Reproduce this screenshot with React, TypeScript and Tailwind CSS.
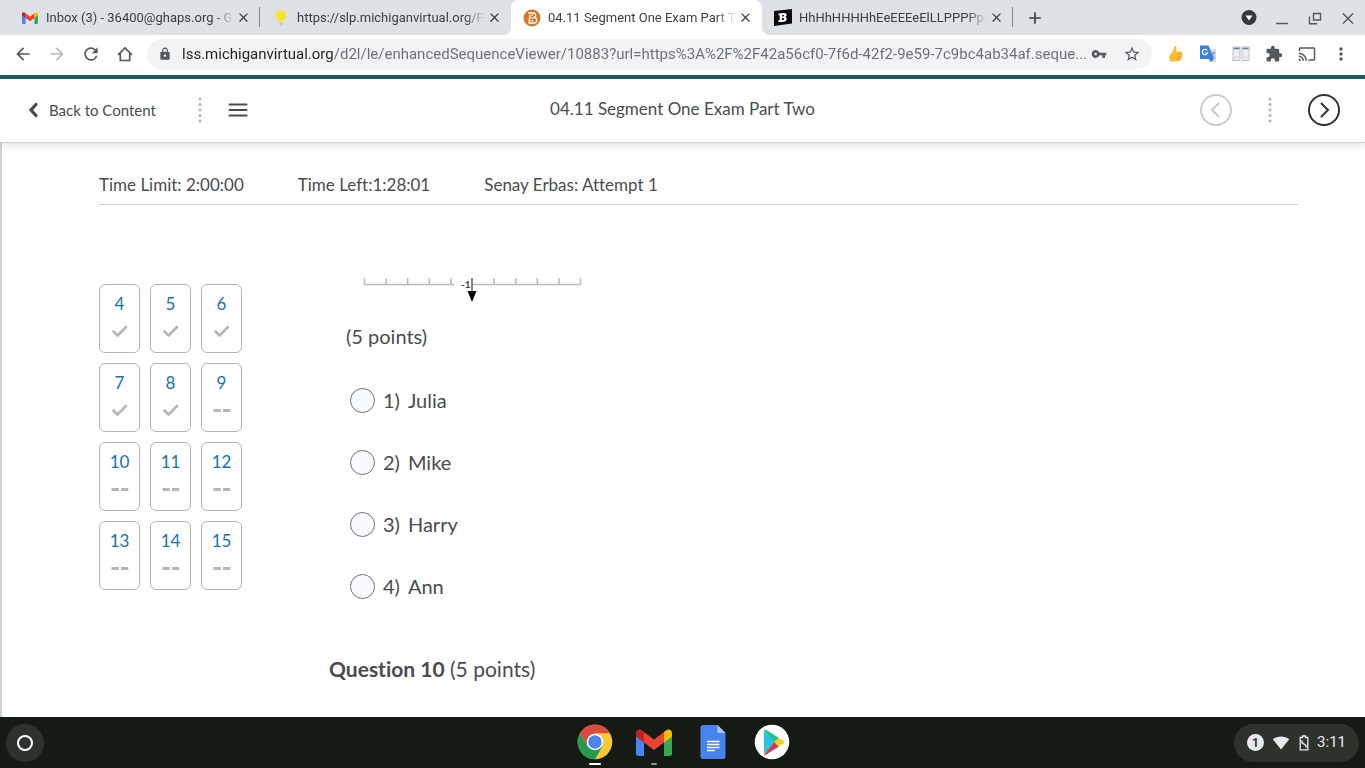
import React from "react";
import {
  MdArrowBack,
  MdArrowForward,
  MdCast,
  MdClose,
  MdAdd,
  MdExtension,
  MdLock,
  MdMoreVert,
  MdRefresh,
  MdStarBorder,
  MdVpnKey,
} from "react-icons/md";

const GmailLogo = ({ className }: { className: string }) => (
  <svg viewBox="0 0 36 27" className={className} aria-hidden="true">
    <path d="M0 4v20.500Q0 27 2.500 27H8V11L4 5z" fill="#4285f4" />
    <path d="M28 11v16h5.500Q36 27 36 24.500V4l-4 1z" fill="#34a853" />
    <path d="M8 3v10.500l10 7.500 10-7.500V3L18 10.500z" fill="#ea4335" />
    <path d="M0 4v3.500l8 6V3L6.500 1.700C3.800-.8 0 .8 0 4z" fill="#c5221f" />
    <path d="M36 4v3.500l-8 6V3l1.500-1.300C32.200-.8 36 .8 36 4z" fill="#fbbc04" />
  </svg>
);

const BulbIcon = () => (
  <svg viewBox="0 0 16 18" className="h-[18px] w-4" aria-hidden="true">
    <path d="M2 2h12v6l-3 3.500v2H5v-2L2 8z" fill="#fde047" opacity=".5" />
    <path d="M8 1.500a4.500 4.500 0 0 0-3 7.800L6.500 12h3L11 9.300a4.500 4.500 0 0 0-3-7.800z" fill="#fbe51e" />
    <path d="M6 13.500h4V15l-2 1.500L6 15z" fill="#c3cbd3" />
  </svg>
);

const CourseIcon = () => (
  <svg viewBox="0 0 18 18" className="h-[18px] w-[18px]" aria-hidden="true">
    <circle cx="9" cy="9" r="8.500" fill="#d9772b" />
    <path d="M5 4h5.500a2.300 2.300 0 0 1 .8 4.400A2.700 2.700 0 0 1 10.500 14H6l1-8" fill="none" stroke="#fff" strokeWidth="1.300" />
    <path d="M8 6.200h2M7.700 9h2.500M7.400 11.800h2.800" stroke="#fff" strokeWidth="1.100" />
  </svg>
);

const BrainlyBIcon = () => (
  <svg viewBox="0 0 18 17" className="h-[17px] w-[18px]" aria-hidden="true">
    <path d="M0 2l18-2v14.500L0 17z" fill="#0a0a0a" />
    <path
      fillRule="evenodd"
      d="M4.500 4.500l5-.6c2.500-.2 3.500 1.100 3 2.600-.2.800-.8 1.200-1.300 1.500 1 .2 1.600 1 1.500 2-.1 1.700-1.500 2.600-3.500 2.800l-4.700.5v-2l1.200-.1V6.300l-1.200.1zM8 6v1.600h1.200c1-.2 1-1.700 0-1.700zm0 3.100v1.900h1.300c1.200-.2 1.200-2 0-2z"
      fill="#fff"
    />
  </svg>
);

type Tab = { title: string; icon: React.ReactNode; active?: boolean; divider?: boolean };

const tabs: Tab[] = [
  { title: "Inbox (3) - 36400@ghaps.org - Gr", icon: <GmailLogo className="h-3 w-4" />, divider: true },
  { title: "https://slp.michiganvirtual.org/Fl", icon: <BulbIcon /> },
  { title: "04.11 Segment One Exam Part Tw", icon: <CourseIcon />, active: true },
  { title: "HhHhHHHHhEeEEEeElLLPPPPpP", icon: <BrainlyBIcon />, divider: true },
];

const flare =
  "before:absolute before:bottom-0 before:-left-2 before:size-2 before:bg-[radial-gradient(circle_at_0_0,transparent_8px,#fff_8px)] after:absolute after:bottom-0 after:-right-2 after:size-2 after:bg-[radial-gradient(circle_at_100%_0,transparent_8px,#fff_8px)]";

const TabStrip = () => (
  <div className="flex h-[35px] items-center bg-[#dee1e6] pl-[9px] text-[#3c4043]">
    {tabs.map((tab) => (
      <div
        key={tab.title}
        className={`relative flex h-full w-[251px] items-center pr-[9px] pl-3 ${tab.active ? `rounded-t-lg bg-white ${flare}` : ""}`}
      >
        <span className="flex w-[18px] shrink-0 justify-center">{tab.icon}</span>
        <button
          type="button"
          className="ml-[7px] min-w-0 flex-1 overflow-hidden text-left text-[13px] leading-5 whitespace-nowrap [mask-image:linear-gradient(to_right,#000_calc(100%-20px),transparent)]"
        >
          {tab.title}
        </button>
        <button type="button" aria-label={`Close ${tab.title}`} className="ml-px flex size-4 shrink-0 items-center justify-center">
          <MdClose className="size-[15px]" />
        </button>
        {tab.divider && <span className="absolute top-[7px] right-0 h-5 w-px bg-[#84888d]" />}
      </div>
    ))}
    <button type="button" aria-label="New tab" className="ml-3 flex size-5 items-center justify-center">
      <MdAdd className="size-5" />
    </button>
    <div className="ml-auto flex items-center gap-[17px] pr-[9px]">
      <button type="button" aria-label="Search tabs">
        <svg viewBox="0 0 16 16" className="size-4">
          <circle cx="8" cy="7.500" r="7.500" fill="#35383c" />
          <path d="M4.500 5.500h7L8 10.500z" fill="#fff" />
        </svg>
      </button>
      <button type="button" aria-label="Minimize">
        <svg viewBox="0 0 16 16" className="size-4" fill="none" stroke="#55595e" strokeWidth="1.500">
          <path d="M2 13.500h12" />
        </svg>
      </button>
      <button type="button" aria-label="Restore">
        <svg viewBox="0 0 16 16" className="size-4" fill="none" stroke="#55595e" strokeWidth="1.400">
          <path d="M6.500 3.500h7v6.500h-7zM2.500 6.500v7.200h7.500" />
        </svg>
      </button>
      <button type="button" aria-label="Close window">
        <svg viewBox="0 0 16 16" className="size-4" fill="none" stroke="#55595e" strokeWidth="1.500">
          <path d="M3 3.500l10 10M13 3.500l-10 10" />
        </svg>
      </button>
    </div>
  </div>
);

const ThumbIcon = () => (
  <svg viewBox="0 0 16 18" className="h-[18px] w-4" aria-hidden="true">
    <path d="M6.500 1.200c1.500-.6 2.300.5 2 2.200L8 6.500h4.800c1.700 0 2 1.800 1 2.500 1 .8.800 2-.2 2.500.6 1 .2 2-.8 2.300.3 1-.3 2-1.600 2.100l-6.500.6C2 16.800 1.200 15 1.300 12.500S2.500 9 4 7.500c1.700-1.800 1.500-4 2.500-6.300z" fill="#fbbc30" />
    <path d="M8.500 9.300h5M8.500 11.600h5M8.500 13.900h4" stroke="#e79a1a" strokeWidth=".7" />
  </svg>
);

const TranslateIcon = () => (
  <svg viewBox="0 0 18 18" className="size-[18px]" aria-hidden="true">
    <path d="M7 4.500h10v12.500h-6z" fill="#d5d8dc" />
    <path d="M1 .5h8.500L15 14l-3.500 3L10 14H1z" fill="#3b7de0" />
    <path d="M8.300 5.500A2.700 2.700 0 1 0 8.500 8H6.200" fill="none" stroke="#fff" strokeWidth="1.200" />
    <path d="M11.500 8h5M14.300 7v2l-1.800 3M13.500 10l2.500 2.500" stroke="#7f93ad" fill="none" strokeWidth=".9" />
  </svg>
);

const ColumnsIcon = () => (
  <svg viewBox="0 0 18 16" className="h-4 w-[18px]" aria-hidden="true">
    <path d="M1 1h7v13.500H1zM10 1h7v13.500h-7z" fill="#eceef1" stroke="#bcc1c8" />
    <path d="M1.500 2.500h6M10.500 2.500h6" stroke="#6384a5" strokeWidth="1.500" />
    <path d="M2 11h5M11 11h5" stroke="#cfd3d8" />
  </svg>
);

const Toolbar = () => (
  <div className="flex h-10 items-center bg-white pb-[2px] text-[#55595e]">
    <div className="flex items-center gap-[14px] pl-[13px]">
      <button type="button" aria-label="Back"><MdArrowBack className="size-5" /></button>
      <button type="button" aria-label="Forward" className="text-[#b8babd]"><MdArrowForward className="size-5" /></button>
      <button type="button" aria-label="Reload"><MdRefresh className="size-5" /></button>
      <button type="button" aria-label="Home">
        <svg viewBox="0 0 20 20" className="size-5" fill="none" stroke="currentColor" strokeWidth="1.700">
          <path d="M3 10.800L10 4l7 6.800M5.300 9.500v7h9.400v-7" />
        </svg>
      </button>
    </div>
    <div className="ml-3 flex h-[30px] min-w-0 flex-1 items-center rounded-full bg-[#f1f3f4] pr-[11px] pl-[11px]">
      <MdLock className="size-[14px] shrink-0" />
      <input
        type="text"
        aria-label="Address"
        defaultValue="lss.michiganvirtual.org/d2l/le/enhancedSequenceViewer/10883?url=https%3A%2F%2F42a56cf0-7f6d-42f2-9e59-7c9bc4ab34af.seque..."
        className="ml-[10px] min-w-0 flex-1 bg-[linear-gradient(to_right,#202124_152px,#6b6f74_152px)] bg-clip-text text-[15px] leading-6 text-transparent outline-none"
      />
      <MdVpnKey className="ml-1 size-4 shrink-0" />
      <button type="button" aria-label="Bookmark" className="ml-4"><MdStarBorder className="size-[18px]" /></button>
    </div>
    <div className="flex items-center gap-[15px] pr-[14px] pl-4">
      <button type="button" aria-label="Like extension"><ThumbIcon /></button>
      <button type="button" aria-label="Translate"><TranslateIcon /></button>
      <button type="button" aria-label="Tab columns"><ColumnsIcon /></button>
      <button type="button" aria-label="Extensions"><MdExtension className="size-[18px]" /></button>
      <button type="button" aria-label="Cast"><MdCast className="size-[18px]" /></button>
      <button type="button" aria-label="Menu"><MdMoreVert className="size-5" /></button>
    </div>
  </div>
);

const Dots = () => (
  <svg viewBox="0 0 4 26" className="h-[26px] w-1" fill="#b0b3b6" aria-hidden="true">
    {[2, 7.5, 13, 18.5, 24].map((y) => (
      <circle key={y} cx="2" cy={y} r="1.500" />
    ))}
  </svg>
);

const CourseHeader = () => (
  <header className="relative grid h-[68px] grid-cols-[1fr_auto_1fr] items-center border-t-4 border-b border-t-[#1d5a5e] border-b-[#cdcfd1] bg-white pb-px shadow-[0_2px_8px_rgba(0,0,0,0.12)]">
    <div className="flex items-center pl-7">
      <a href="#content" className="flex items-center gap-[10px] text-[15px] leading-5">
        <svg viewBox="0 0 11 16" className="h-4 w-[11px]" fill="none" stroke="#494c4e" strokeWidth="3.300" strokeLinecap="round">
          <path d="M8 2.500L3 8l5 5.500" />
        </svg>
        Back to Content
      </a>
      <span className="ml-[42px]"><Dots /></span>
      <button type="button" aria-label="Open menu" className="ml-[26px]">
        <svg viewBox="0 0 20 14" className="h-[14px] w-5" stroke="#494c4e" strokeWidth="2" strokeLinecap="round">
          <path d="M1.500 1.500h17M1.500 7h17M1.500 12.500h17" />
        </svg>
      </button>
    </div>
    <h1 className="pb-[2px] text-[17px] leading-6">04.11 Segment One Exam Part Two</h1>
    <div className="flex items-center justify-end gap-[35px] pr-6">
      <button type="button" aria-label="Previous" disabled className="text-[#cbcccd]">
        <svg viewBox="0 0 34 34" className="size-[34px]" fill="none" stroke="currentColor" strokeWidth="2" strokeLinecap="round">
          <circle cx="17" cy="17" r="15" />
          <path d="M19.500 10.500L13 17l6.500 6.500" />
        </svg>
      </button>
      <Dots />
      <button type="button" aria-label="Next" className="text-[#303336]">
        <svg viewBox="0 0 34 34" className="size-[34px]" fill="none" stroke="currentColor" strokeWidth="2" strokeLinecap="round">
          <circle cx="17" cy="17" r="15" />
          <path d="M14.500 10.500L21 17l-6.500 6.500" />
        </svg>
      </button>
    </div>
  </header>
);

const questions = Array.from({ length: 12 }, (_, i) => ({ number: i + 4, done: i + 4 < 9 }));

const QuestionNav = () => (
  <nav aria-label="Questions" className="mt-[79px] grid w-[143px] shrink-0 grid-cols-3 content-start gap-[10px]">
    {questions.map((q) => (
      <a
        key={q.number}
        href={`#question-${q.number}`}
        className="flex h-[69px] flex-col items-center rounded-md border border-[#b1b5b9] pt-[7px] text-[17px] leading-6 text-[#1673b1]"
      >
        {q.number}
        <svg viewBox="0 0 18 16" className="mt-[7px] h-4 w-[18px]" fill="none" stroke="#b1b7bb" aria-hidden="true">
          {q.done ? (
            <path d="M2.500 8.500l4 4L15 4" strokeWidth="2.600" strokeLinecap="round" strokeLinejoin="round" />
          ) : (
            <path d="M.5 8.500h7.300M10 8.500h7.300" strokeWidth="3" />
          )}
        </svg>
      </a>
    ))}
  </nav>
);

const Graph = () => (
  <svg viewBox="0 0 220 26" className="ml-[34px] h-[26px] w-[220px]" aria-hidden="true">
    <path d="M1.500 6.500H91M110 6.500h107.500" stroke="#b9b9b9" strokeWidth="1.500" />
    {[0, 1, 2, 3, 4, 6, 7, 8, 9, 10].map((i) => (
      <path key={i} d={`M${1.5 + i * 21.6} 0v6.500`} stroke="#b9b9b9" strokeWidth="1.500" />
    ))}
    <text x="98" y="10" fontSize="10" fontWeight="700" fill="#444">-1</text>
    <path d="M109 0v15" stroke="#333" strokeWidth="1.200" />
    <path d="M104.500 13h9l-4.500 11z" fill="#000" />
  </svg>
);

const answers = ["Julia", "Mike", "Harry", "Ann"];

const Quiz = () => (
  <main className="flex flex-1 flex-col border-l-2 border-[#c9d3dd] bg-white pr-[67px] pl-[97px]">
    <div className="flex gap-[54px] border-b border-[#cdcfd1] pt-[30px] pb-[7px] text-[17px] leading-6">
      <span>Time Limit: 2:00:00</span>
      <span>Time Left:1:28:01</span>
      <span>Senay Erbas: Attempt 1</span>
    </div>
    <div className="flex gap-[87px]">
      <QuestionNav />
      <section className="flex-1 pt-[73px] text-xl leading-[30px]">
        <Graph />
        <p className="mt-[17px] pl-[17px]">(5 points)</p>
        <div role="radiogroup" aria-label="Answer" className="mt-[34px] flex flex-col gap-8 pl-[21px]">
          {answers.map((name, i) => (
            <label key={name} className="flex items-center gap-2">
              <input
                type="radio"
                name="question-9"
                className="size-[25px] appearance-none rounded-full border border-[#6e7376] bg-[#f9fafd] checked:border-[8px] checked:border-[#1673b1]"
              />
              <span>{i + 1})</span>
              <span>{name}</span>
            </label>
          ))}
        </div>
        <h2 className="mt-[53px] pb-8 text-[21px]">
          <strong>Question 10</strong> (5 points)
        </h2>
      </section>
    </div>
  </main>
);

const ChromeLogo = () => (
  <svg viewBox="0 0 36 36" className="size-9" aria-hidden="true">
    <circle cx="18" cy="18" r="17.300" fill="#fcc934" />
    <path d="M3 9.300A17.300 17.300 0 0 1 33 9.300H18L10.500 22.500z" fill="#d94b3f" />
    <path d="M3 9.300A17.300 17.300 0 0 0 18 35.300L25.500 22.300 10.500 22.500z" fill="#279a52" />
    <circle cx="18" cy="18" r="8.300" fill="#fff" />
    <circle cx="18" cy="18" r="6.700" fill="#4c83ee" />
  </svg>
);

const DocsLogo = () => (
  <svg viewBox="0 0 26 36" className="h-9 w-[26px]" aria-hidden="true">
    <path d="M3 1h14.500l8 8v23.500a2.500 2.500 0 0 1-2.500 2.500H3a2.500 2.500 0 0 1-2.500-2.500v-29A2.500 2.500 0 0 1 3 1z" fill="#4584f0" />
    <path d="M17.500 1l8 8h-8z" fill="#a9c8fa" />
    <path d="M7 17.500h12.500M7 20.500h12.500M7 23.500h12.500M7 26.500h8" stroke="#fff" strokeWidth="1.500" />
  </svg>
);

const PlayLogo = () => (
  <svg viewBox="0 0 36 36" className="size-9" aria-hidden="true">
    <circle cx="18" cy="18" r="17.300" fill="#fff" />
    <path d="M10 6.500v23.500L21.500 18z" fill="#28c4e6" />
    <path d="M10 6c1-.6 1.700-.3 2.700.3L25 14l-4.500 4.500z" fill="#1fc58a" />
    <path d="M10 30.500c1 .6 1.700.3 2.700-.3L25 22.500l-4.500-4.500z" fill="#d13b4c" />
    <path d="M24.500 13.700l5 3c1.300.8 1.300 2 0 2.800l-5 3L20.300 18z" fill="#fdce20" />
  </svg>
);

const Shelf = () => (
  <footer className="grid h-[51px] grid-cols-[1fr_auto_1fr] items-center bg-[#151b14] text-[#e8eaed]">
    <button type="button" aria-label="Launcher" className="ml-[6px] flex size-[38px] items-center justify-center rounded-full bg-[#2c322c]">
      <span className="size-4 rounded-full border-2 border-white" />
    </button>
    <div className="flex items-center gap-[23px] pb-px pl-[2px]">
      <button type="button" aria-label="Chrome" className="relative">
        <ChromeLogo />
        <span className="absolute -bottom-[5px] left-3 h-0.5 w-3 rounded-full bg-white" />
      </button>
      <button type="button" aria-label="Gmail" className="relative flex h-9 items-center">
        <GmailLogo className="h-[27px] w-9" />
        <span className="absolute -bottom-[5px] left-[15px] h-0.5 w-[6px] rounded-full bg-[#8e918e]" />
      </button>
      <button type="button" aria-label="Docs" className="flex w-9 justify-center"><DocsLogo /></button>
      <button type="button" aria-label="Play Store"><PlayLogo /></button>
    </div>
    <button type="button" className="mr-[6px] flex h-[38px] items-center justify-self-end rounded-full bg-[#2c322c] px-[13px] text-[15px]">
      <span className="flex size-[17px] items-center justify-center rounded-full bg-[#e8eaed] text-[12px] font-bold text-[#2c322c]">1</span>
      <svg viewBox="0 0 18 14" className="ml-2 h-[14px] w-[18px]" fill="currentColor" aria-hidden="true">
        <path d="M9 13.500L.8 3.200C5.500-.4 12.500-.4 17.200 3.200z" />
      </svg>
      <svg viewBox="0 0 10 16" className="ml-[9px] h-4 w-[10px]" aria-hidden="true">
        <path d="M3.500 1h3v1.500h2.300v12.300H1.200V2.500h2.300z" fill="none" stroke="currentColor" strokeWidth="1.300" />
        <path d="M3 5.500v2l4 3v2" fill="none" stroke="currentColor" strokeWidth="1.500" />
      </svg>
      <span className="ml-[8px]">3:11</span>
    </button>
  </footer>
);

export default function App() {
  return (
    <div className="flex min-h-screen flex-col bg-white font-[Roboto,sans-serif]">
      <TabStrip />
      <Toolbar />
      <div className="flex flex-1 flex-col font-[Lato,sans-serif] text-[#494c4e] [font-variant-ligatures:none]">
        <CourseHeader />
        <Quiz />
      </div>
      <Shelf />
    </div>
  );
}
